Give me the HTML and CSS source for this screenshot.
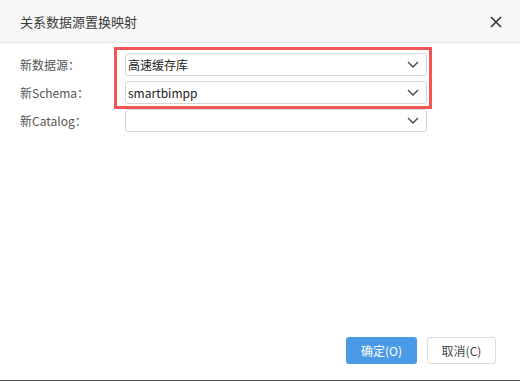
FILE: index.html
```html
<!DOCTYPE html>
<html>
  <head>
    <meta charset="utf-8" />
    <title>关系数据源置换映射</title>
    <link rel="stylesheet" href="styles.css">
  </head>

  <body>
    <div class="dialog">
      <div class="header">
        <span class="title">关系数据源置换映射</span>
        <svg class="close" width="12" height="12" viewBox="0 0 12 12">
          <path d="M1 1 L11 11 M11 1 L1 11" stroke="#333" stroke-width="1.6" fill="none" />
        </svg>
      </div>
      <div class="body">
        <div class="highlight"></div>
        <div class="row">
          <label>新数据源：</label>
          <div class="select">
            <span>高速缓存库</span>
            <svg class="arrow" width="12" height="7" viewBox="0 0 12 7">
              <path d="M1 1 L6 6 L11 1" stroke="#444" stroke-width="1.3" fill="none" />
            </svg>
          </div>
        </div>
        <div class="row">
          <label>新Schema：</label>
          <div class="select">
            <span>smartbimpp</span>
            <svg class="arrow" width="12" height="7" viewBox="0 0 12 7">
              <path d="M1 1 L6 6 L11 1" stroke="#444" stroke-width="1.3" fill="none" />
            </svg>
          </div>
        </div>
        <div class="row">
          <label>新Catalog：</label>
          <div class="select">
            <span></span>
            <svg class="arrow" width="12" height="7" viewBox="0 0 12 7">
              <path d="M1 1 L6 6 L11 1" stroke="#444" stroke-width="1.3" fill="none" />
            </svg>
          </div>
        </div>
      </div>
      <div class="footer">
        <button class="ok">确定(O)</button>
        <button class="cancel">取消(C)</button>
      </div>
    </div>
  </body>
</html>
```

FILE: styles.css
```css
* {
  box-sizing: border-box;
}

html,
body {
  margin: 0;
  padding: 0;
}

body {
  font-family: "Noto Sans CJK SC", sans-serif;
  font-size: 12px;
  color: #333;
}

.dialog {
  width: 520px;
  height: 381px;
  display: flex;
  flex-direction: column;
  background: #fff;
  border-bottom: 1px solid #555;
}

.header {
  height: 43px;
  flex: none;
  display: flex;
  align-items: center;
  justify-content: space-between;
  padding: 0 18px 0 20px;
  background: #f7f7f7;
  border-bottom: 1px solid #e8e8e8;
}

.title {
  font-size: 13px;
  color: #3a3a3a;
}

.close {
  margin-top: 1px;
}

.body {
  flex: 1;
  position: relative;
  display: flex;
  flex-direction: column;
  gap: 5px;
  padding: 10px 93px 0 20px;
}

.highlight {
  position: absolute;
  left: 114px;
  top: 4px;
  width: 318px;
  height: 62px;
  border: 3px solid #f35454;
}

.row {
  display: flex;
  align-items: center;
}

.row label {
  width: 105px;
  color: #555;
}

.select {
  flex: 1;
  height: 23px;
  display: flex;
  align-items: center;
  justify-content: space-between;
  padding: 0 7px 0 2px;
  border: 1px solid #d6d6d6;
  border-radius: 3px;
  background: #fff;
  color: #222;
}

.footer {
  flex: none;
  display: flex;
  justify-content: flex-end;
  gap: 10px;
  padding: 0 24px 16px 0;
}

button {
  height: 27px;
  font-family: inherit;
  font-size: 12px;
  border-radius: 3px;
  cursor: pointer;
}

.ok {
  width: 71px;
  background: #4a9ae6;
  color: #fff;
  border: none;
}

.cancel {
  width: 69px;
  background: #fff;
  color: #444;
  border: 1px solid #dcdcdc;
}
```
